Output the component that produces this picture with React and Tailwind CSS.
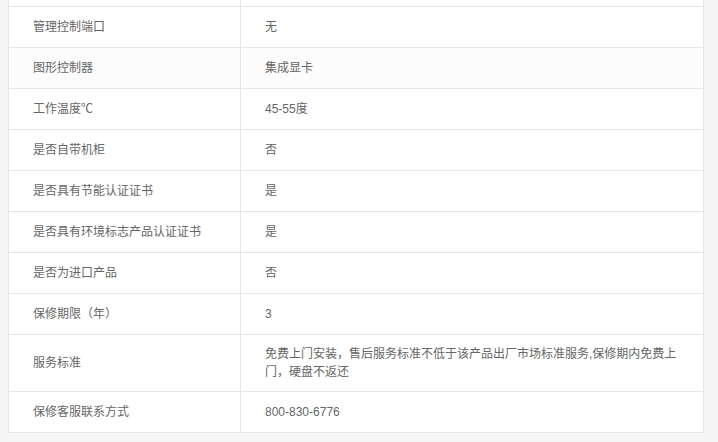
import React from "react";

const rows = [
  ["管理控制端口", "无"],
  ["图形控制器", "集成显卡", true],
  ["工作温度℃", "45-55度"],
  ["是否自带机柜", "否"],
  ["是否具有节能认证证书", "是"],
  ["是否具有环境标志产品认证证书", "是"],
  ["是否为进口产品", "否"],
  ["保修期限（年）", "3"],
  ["服务标准", "免费上门安装，售后服务标准不低于该产品出厂市场标准服务,保修期内免费上门，硬盘不返还"],
  ["保修客服联系方式", "800-830-6776"],
];

export default function App() {
  return (
    <div
      className="w-[718px] h-[442px] overflow-hidden bg-[#f5f5f5] pl-2 text-[12px] text-[#666]"
      style={{ fontFamily: '"Liberation Sans", "Noto Sans CJK SC", sans-serif' }}
    >
      <div className="w-[696px] bg-white border-l border-r border-[#e6e6e6]">
        <div className="grid grid-cols-[232px_1fr] h-[7px] border-b border-[#e6e6e6]">
          <div className="border-r border-[#e6e6e6]" />
          <div />
        </div>
        {rows.map(([k, v, shade], i) => (
          <div
            key={i}
            className={`grid grid-cols-[232px_1fr] border-b border-[#e6e6e6] ${shade ? "bg-[#fcfcfc]" : "bg-white"}`}
          >
            <div className="border-r border-[#e6e6e6] px-6 py-[10px] min-h-[40px] flex items-center leading-[18px]">
              {k}
            </div>
            <div className="px-6 py-[10px] min-h-[40px] flex items-center leading-[18px]">
              <span>{v}</span>
            </div>
          </div>
        ))}
      </div>
    </div>
  );
}
